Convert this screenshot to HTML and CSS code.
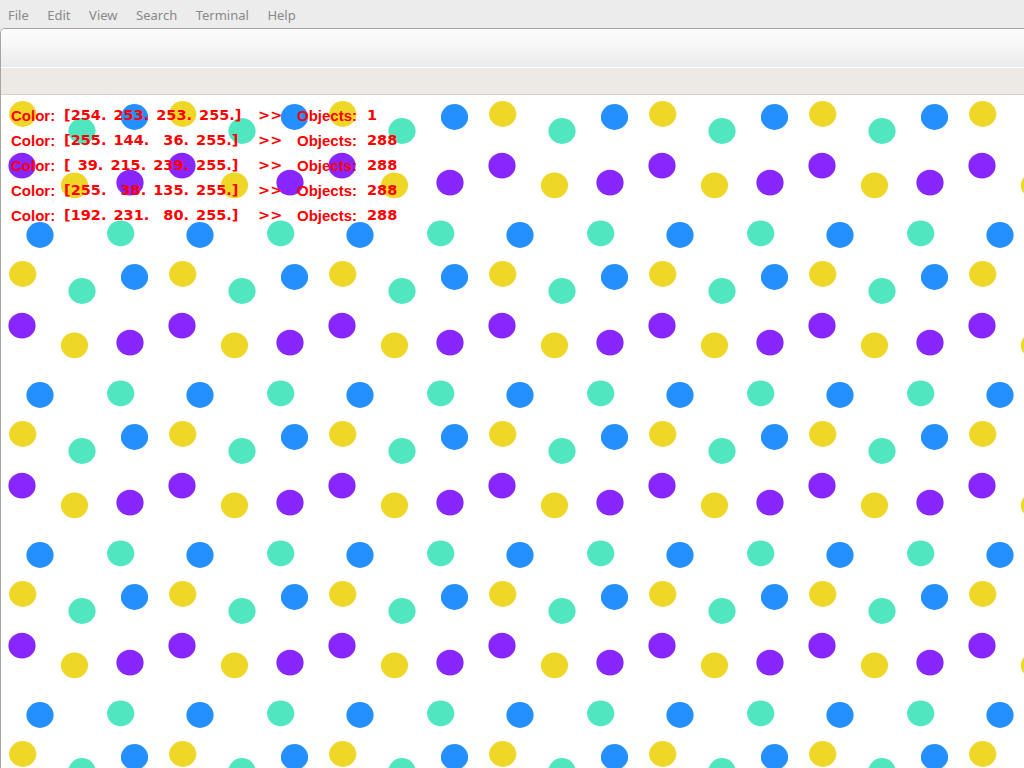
FILE: index.html
```html
<!DOCTYPE html>
<html>
<head>
<meta charset="utf-8">
<title>Terminal</title>
<link rel="stylesheet" href="styles.css">
</head>
<body>
  <div class="menubar">
    <span class="menu-item">File</span>
    <span class="menu-item">Edit</span>
    <span class="menu-item">View</span>
    <span class="menu-item">Search</span>
    <span class="menu-item">Terminal</span>
    <span class="menu-item">Help</span>
  </div>
  <div class="window">
    <div class="toolbar"></div>
    <div class="infobar"></div>
    <div class="canvas">
      <svg class="dots" width="1023" height="673" viewBox="0 0 1023 673" xmlns="http://www.w3.org/2000/svg">
        <defs>
          <pattern id="tile" x="0" y="0" width="160" height="160" patternUnits="userSpaceOnUse">
            <ellipse cx="21.7" cy="19" rx="13.6" ry="12.9" fill="#efd727"/>
            <ellipse cx="133.5" cy="22" rx="13.6" ry="12.9" fill="#2490ff"/>
            <ellipse cx="81" cy="36" rx="13.6" ry="12.9" fill="#50e7c0"/>
            <ellipse cx="21" cy="70.7" rx="13.6" ry="12.9" fill="#8726ff"/>
            <ellipse cx="73.5" cy="90.3" rx="13.6" ry="12.9" fill="#efd727"/>
            <ellipse cx="129" cy="87.7" rx="13.6" ry="12.9" fill="#8726ff"/>
            <ellipse cx="39" cy="140" rx="13.6" ry="12.9" fill="#2490ff"/>
            <ellipse cx="119.7" cy="138.3" rx="13.6" ry="12.9" fill="#50e7c0"/>
          </pattern>
        </defs>
        <rect x="0" y="0" width="1023" height="673" fill="#ffffff"/>
        <rect x="0" y="0" width="1023" height="673" fill="url(#tile)"/>
      </svg>
      <div class="overlay">
        <div class="line"><span class="word">Color:</span><span class="arr">[254. 253. 253. 255.]</span><span class="arrow">&gt;&gt;</span><span class="word">Objects:</span><span class="num">1</span></div>
        <div class="line"><span class="word">Color:</span><span class="arr">[255. 144.  36. 255.]</span><span class="arrow">&gt;&gt;</span><span class="word">Objects:</span><span class="num">288</span></div>
        <div class="line"><span class="word">Color:</span><span class="arr">[ 39. 215. 239. 255.]</span><span class="arrow">&gt;&gt;</span><span class="word">Objects:</span><span class="num">288</span></div>
        <div class="line"><span class="word">Color:</span><span class="arr">[255.  38. 135. 255.]</span><span class="arrow">&gt;&gt;</span><span class="word">Objects:</span><span class="num">288</span></div>
        <div class="line"><span class="word">Color:</span><span class="arr">[192. 231.  80. 255.]</span><span class="arrow">&gt;&gt;</span><span class="word">Objects:</span><span class="num">288</span></div>
      </div>
    </div>
  </div>
</body>
</html>
```

FILE: styles.css
```css
html, body {
  margin: 0;
  padding: 0;
}

body {
  width: 1024px;
  height: 768px;
  overflow: hidden;
  background: #ececec;
  font-family: "Noto Sans", "DejaVu Sans", sans-serif;
}

.menubar {
  height: 28px;
  display: flex;
  gap: 18.5px;
  padding-left: 8px;
  padding-top: 2px;
  background: #ececec;
  box-sizing: border-box;
}

.menu-item {
  font-size: 13px;
  line-height: 26px;
  color: #888888;
}

.window {
  border-top: 1px solid #a5a5a5;
  border-left: 1px solid #a5a5a5;
  border-top-left-radius: 5px;
  overflow: hidden;
  background: #ffffff;
}

.toolbar {
  height: 38px;
  background: linear-gradient(to bottom, #fcfcfc 0%, #f7f7f7 40%, #ebebeb 100%);
  border-bottom: 1px solid #ffffff;
}

.infobar {
  height: 26px;
  background: #edeae6;
  border-bottom: 1px solid #d6d2cb;
}

.canvas {
  position: relative;
  height: 673px;
  background: #ffffff;
}

.dots {
  display: block;
}

.overlay {
  position: absolute;
  top: 0;
  left: 0;
  padding: 8px 0 0 10px;
  font-weight: bold;
  color: #ff0000;
}

.line {
  display: grid;
  grid-template-columns: 53px 194px 39px 70px auto;
  align-items: start;
  height: 25px;
  white-space: pre;
}

.line > span {
  display: block;
  height: 25px;
  line-height: 25px;
}

.word {
  font-family: "Liberation Sans", Arial, sans-serif;
  font-size: 15px;
}

.arr,
.arrow,
.num {
  font-family: "DejaVu Sans", sans-serif;
  font-size: 14.5px;
}

.arr {
  word-spacing: 2px;
}
```
